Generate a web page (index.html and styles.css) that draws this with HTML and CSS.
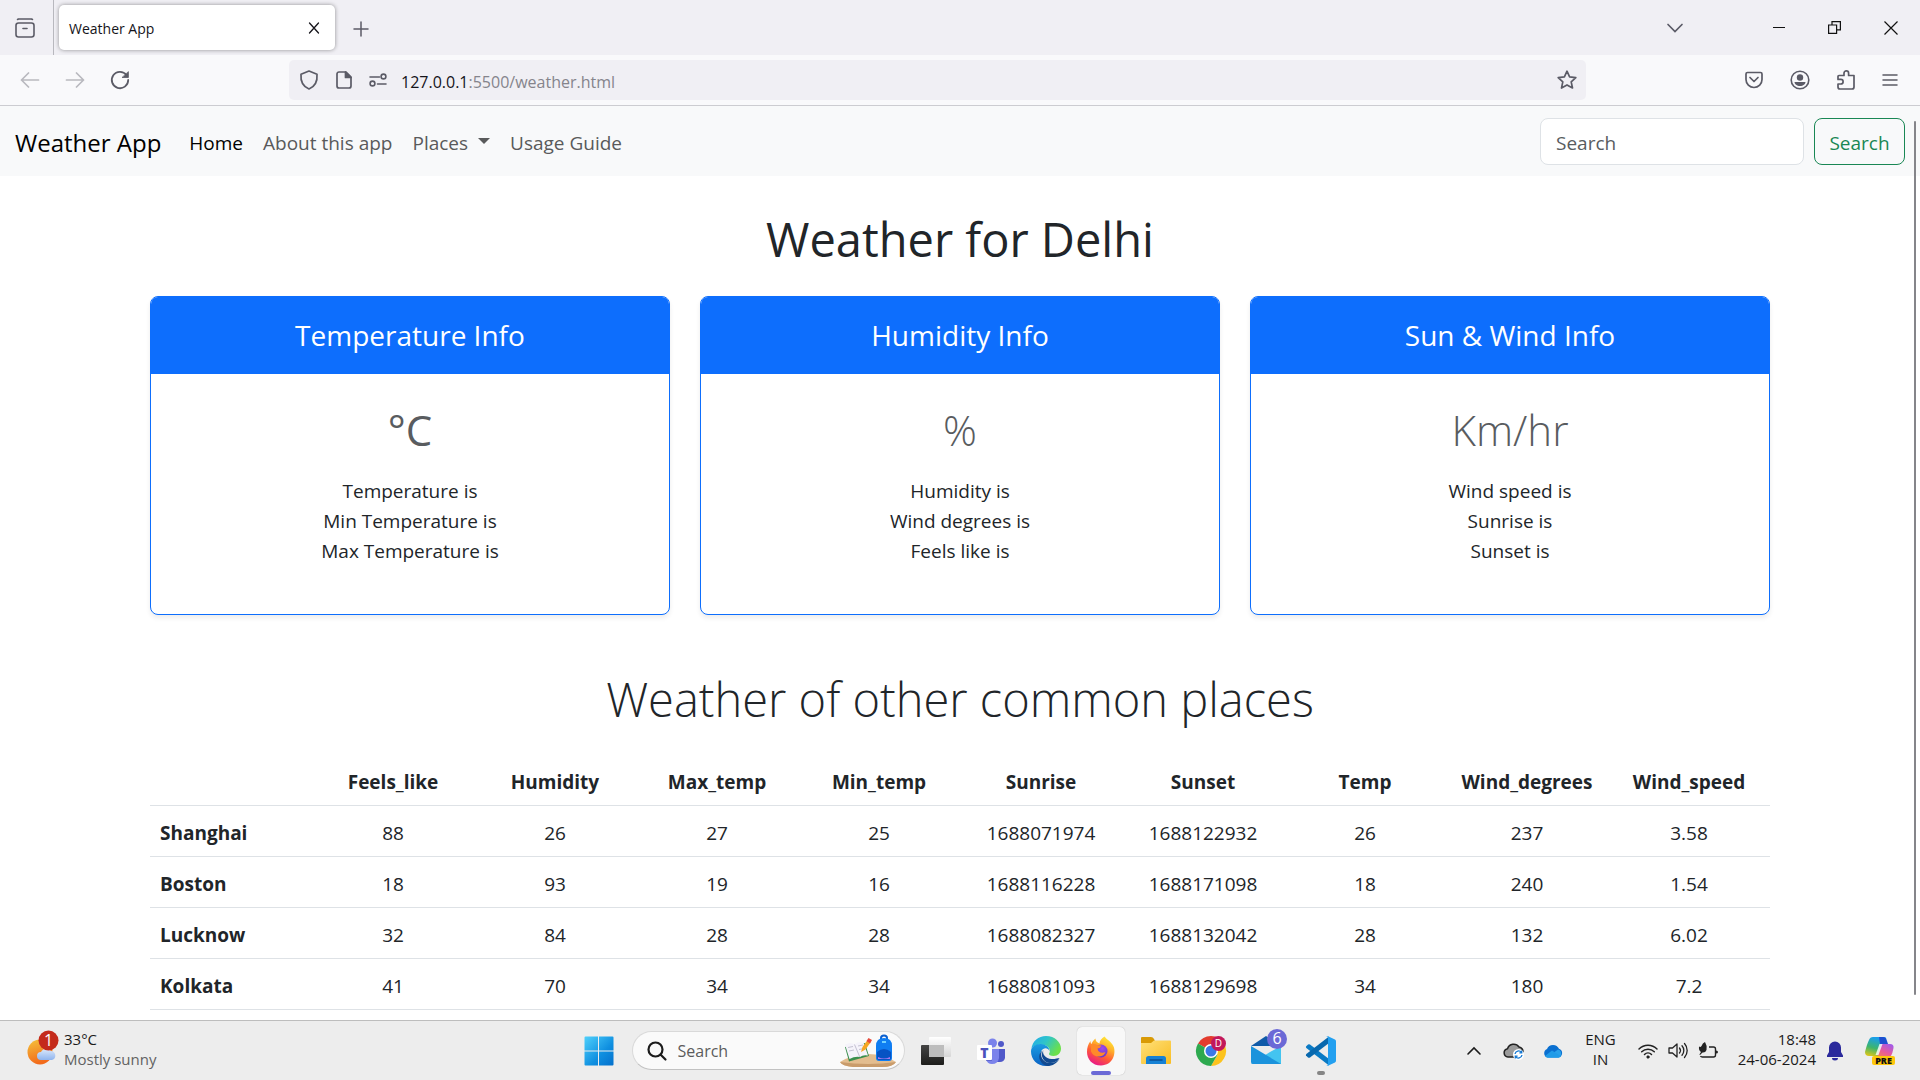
FILE: index.html
```html
<!DOCTYPE html>
<html lang="en">
<head>
<meta charset="utf-8">
<meta name="viewport" content="width=device-width, initial-scale=1">
<title>Weather App</title>
<link rel="stylesheet" href="styles.css">
</head>
<body>
<div class="tab-strip">
  <button class="icon-btn view-btn" aria-label="Firefox View">
    <svg width="20" height="20" viewBox="0 0 20 20" fill="none" stroke="#5b5b66" stroke-width="1.600" stroke-linecap="round"><path d="M3.500 1h13M2.500 1.500l1-.5M17.500 1.500l-1-.5"/><rect x="1" y="5" width="18" height="14" rx="2.500"/><path d="M8 10.500h4"/></svg>
  </button>
  <div class="tab">
    <span class="tab-title">Weather App</span>
    <button class="icon-btn" aria-label="Close tab"><svg width="12" height="12" viewBox="0 0 12 12" stroke="#15141a" stroke-width="1.300" stroke-linecap="round"><path d="M1.500 1l9 10M10.500 1l-9 10"/></svg></button>
  </div>
  <button class="icon-btn new-tab" aria-label="New tab"><svg width="16" height="16" viewBox="0 0 16 16" stroke="#5b5b66" stroke-width="1.500" stroke-linecap="round"><path d="M8 1v14M1 8h14"/></svg></button>
  <div class="window-controls">
    <button class="icon-btn list-tabs" aria-label="List all tabs"><svg width="16" height="10" viewBox="0 0 16 10" fill="none" stroke="#5b5b66" stroke-width="1.700" stroke-linecap="round"><path d="M1 1.500l7 7 7-7"/></svg></button>
    <button class="icon-btn" aria-label="Minimize"><svg width="12" height="12" viewBox="0 0 12 12" stroke="#111"><path d="M0 5.500h12"/></svg></button>
    <button class="icon-btn" aria-label="Restore"><svg width="13" height="13" viewBox="0 0 13 13" fill="none" stroke="#111" stroke-width="1.200"><path d="M.6 4h8v8.400h-8zM4 4V.6h8.400v8.200H8.600"/></svg></button>
    <button class="icon-btn" aria-label="Close window"><svg width="14" height="14" viewBox="0 0 14 14" stroke="#111" stroke-width="1.200"><path d="M.5.5l13 13M13.500.5l-13 13"/></svg></button>
  </div>
</div>

<div class="toolbar">
  <div class="nav-buttons">
    <button class="icon-btn faded" aria-label="Back"><svg width="20" height="20" viewBox="0 0 20 20" fill="none" stroke="#5b5b66" stroke-width="1.700" stroke-linecap="round" stroke-linejoin="round"><path d="M18.500 10H1.500M8.500 3l-7 7 7 7"/></svg></button>
    <button class="icon-btn faded" aria-label="Forward"><svg width="20" height="20" viewBox="0 0 20 20" fill="none" stroke="#5b5b66" stroke-width="1.700" stroke-linecap="round" stroke-linejoin="round"><path d="M1.500 10h17M11.500 3l7 7-7 7"/></svg></button>
    <button class="icon-btn" aria-label="Reload"><svg width="20" height="20" viewBox="0 0 20 20" fill="none" stroke="#5b5b66" stroke-width="1.800" stroke-linecap="round"><path d="M16.500 5A8.200 8.200 0 1 0 18.200 10"/><path d="M18.400 2v5.500h-6z" fill="#5b5b66" stroke-width=".8" stroke-linejoin="round"/></svg></button>
  </div>
  <div class="url-bar">
    <svg width="20" height="20" viewBox="0 0 20 20" fill="none" stroke="#5b5b66" stroke-width="1.700" stroke-linejoin="round"><path d="M10 1L18 4.200C18.500 10 17 16 10 19 3 16 1.500 10 2 4.200z"/></svg>
    <svg width="16" height="18" viewBox="0 0 16 18" fill="none" stroke="#5b5b66" stroke-width="1.700" stroke-linejoin="round"><path d="M3 1h7l5 5v9a2 2 0 0 1-2 2H3a2 2 0 0 1-2-2V3a2 2 0 0 1 2-2z"/><path d="M9.500 1v5.500H15z" fill="#5b5b66"/></svg>
    <svg width="18" height="14" viewBox="0 0 18 14" fill="none" stroke="#5b5b66" stroke-width="1.600" stroke-linecap="round"><path d="M1 4h9.500M8.500 11H17"/><circle cx="14.500" cy="3.500" r="2.400"/><circle cx="3.500" cy="10.500" r="2.400"/></svg>
    <span class="url"><span class="url-host">127.0.0.1</span>:5500/weather.html</span>
    <button class="icon-btn" aria-label="Bookmark this page"><svg width="20" height="20" viewBox="0 0 20 20" fill="none" stroke="#5b5b66" stroke-width="1.700" stroke-linejoin="round"><path d="M10 1.200l2.600 5.700 6.200.7-4.600 4.200 1.300 6.200-5.500-3.100-5.500 3.100 1.300-6.200L1.200 7.600l6.200-.7z"/></svg></button>
  </div>
  <div class="tool-buttons">
    <button class="icon-btn" aria-label="Save to Pocket"><svg width="18" height="18" viewBox="0 0 18 18" fill="none" stroke="#5b5b66" stroke-width="1.700" stroke-linecap="round" stroke-linejoin="round"><path d="M2.500 1.500h13A1.500 1.500 0 0 1 17 3v5.500a8 8 0 0 1-16 0V3a1.500 1.500 0 0 1 1.500-1.500zM5 6.500l4 4 4-4"/></svg></button>
    <button class="icon-btn" aria-label="Account"><svg width="20" height="20" viewBox="0 0 20 20"><circle cx="10" cy="10" r="8.800" fill="none" stroke="#5b5b66" stroke-width="1.600"/><circle cx="10" cy="7.500" r="3.200" fill="#5b5b66"/><path d="M4.500 12h11c0 2-2.400 4-5.500 4s-5.500-2-5.500-4z" fill="#5b5b66"/></svg></button>
    <button class="icon-btn" aria-label="Extensions"><svg width="18" height="20" viewBox="0 0 18 20" fill="none" stroke="#5b5b66" stroke-width="1.700" stroke-linejoin="round"><path d="M2 5.500h5V3.200a2.300 2.300 0 0 1 4.600 0v2.300H17V17a2 2 0 0 1-2 2H3a2 2 0 0 1-2-2v-3h2.800a2.300 2.300 0 0 0 0-4.600H1V6.500a1 1 0 0 1 1-1z"/></svg></button>
    <button class="icon-btn" aria-label="Open menu"><svg width="16" height="14" viewBox="0 0 16 14" stroke="#5b5b66" stroke-width="1.500" stroke-linecap="round"><path d="M1 2h14M1 7h14M1 12h14"/></svg></button>
  </div>
</div>

<div class="viewport">
  <nav class="navbar">
    <a class="brand" href="#">Weather App</a>
    <ul class="nav-links">
      <li><a class="active" href="#">Home</a></li>
      <li><a href="#about">About this app</a></li>
      <li><a class="dropdown" href="#places">Places</a></li>
      <li><a href="#guide">Usage Guide</a></li>
    </ul>
    <form class="search-form">
      <input type="search" placeholder="Search" aria-label="Search">
      <button type="button">Search</button>
    </form>
  </nav>

  <main class="container">
    <h1>Weather for Delhi</h1>
    <div class="cards">
      <section class="card">
        <h2>Temperature Info</h2>
        <div class="card-body">
          <p class="unit unit-regular">°C</p>
          <ul><li>Temperature is</li><li>Min Temperature is</li><li>Max Temperature is</li></ul>
        </div>
      </section>
      <section class="card">
        <h2>Humidity Info</h2>
        <div class="card-body">
          <p class="unit">%</p>
          <ul><li>Humidity is</li><li>Wind degrees is</li><li>Feels like is</li></ul>
        </div>
      </section>
      <section class="card">
        <h2>Sun &amp; Wind Info</h2>
        <div class="card-body">
          <p class="unit">Km/hr</p>
          <ul><li>Wind speed is</li><li>Sunrise is</li><li>Sunset is</li></ul>
        </div>
      </section>
    </div>

    <h2 class="places-title">Weather of other common places</h2>
    <table>
      <thead>
        <tr><td></td><th scope="col">Feels_like</th><th scope="col">Humidity</th><th scope="col">Max_temp</th><th scope="col">Min_temp</th><th scope="col">Sunrise</th><th scope="col">Sunset</th><th scope="col">Temp</th><th scope="col">Wind_degrees</th><th scope="col">Wind_speed</th></tr>
      </thead>
      <tbody>
        <tr><th scope="row">Shanghai</th><td>88</td><td>26</td><td>27</td><td>25</td><td>1688071974</td><td>1688122932</td><td>26</td><td>237</td><td>3.58</td></tr>
        <tr><th scope="row">Boston</th><td>18</td><td>93</td><td>19</td><td>16</td><td>1688116228</td><td>1688171098</td><td>18</td><td>240</td><td>1.54</td></tr>
        <tr><th scope="row">Lucknow</th><td>32</td><td>84</td><td>28</td><td>28</td><td>1688082327</td><td>1688132042</td><td>28</td><td>132</td><td>6.02</td></tr>
        <tr><th scope="row">Kolkata</th><td>41</td><td>70</td><td>34</td><td>34</td><td>1688081093</td><td>1688129698</td><td>34</td><td>180</td><td>7.2</td></tr>
      </tbody>
    </table>
  </main>
  <div class="scroll-thumb"></div>
</div>

<footer class="taskbar">
  <button class="widget">
    <svg width="32" height="36" viewBox="0 0 32 36">
      <defs><linearGradient id="sun" x1="0" y1="0" x2=".3" y2="1"><stop offset="0" stop-color="#f5c33b"/><stop offset="1" stop-color="#f26a1b"/></linearGradient><linearGradient id="cloud" x1="0" y1="0" x2="0" y2="1"><stop offset="0" stop-color="#dce9fb"/><stop offset="1" stop-color="#8fb4ee"/></linearGradient></defs>
      <circle cx="13" cy="22" r="12.500" fill="url(#sun)"/>
      <path d="M14 30a4 4 0 0 1 0-8 6 6 0 0 1 10-1 4.600 4.600 0 0 1 1 9z" fill="url(#cloud)"/>
      <circle cx="21.500" cy="10.500" r="10" fill="#c42b1c"/>
      <text x="21.500" y="16" text-anchor="middle" class="badge-text">1</text>
    </svg>
    <span class="widget-text"><span>33°C</span><span class="muted">Mostly sunny</span></span>
  </button>

  <div class="apps">
    <button class="app" aria-label="Start"><svg width="30" height="30" viewBox="0 0 30 30"><defs><linearGradient id="win" x1="0" y1="0" x2="1" y2="1"><stop offset="0" stop-color="#4fd0fb"/><stop offset=".6" stop-color="#0f8fe0"/><stop offset="1" stop-color="#0470cc"/></linearGradient></defs><path fill="url(#win)" d="M1.500.5H14v14H.5v-13a1 1 0 0 1 1-1zM15 .5h13.500a1 1 0 0 1 1 1v13H15zM.5 15.500H14v14H1.500a1 1 0 0 1-1-1zM15 15.500h14.500v13a1 1 0 0 1-1 1H15z"/></svg></button>
    <label class="task-search">
      <svg width="20" height="20" viewBox="0 0 20 20" fill="none" stroke="#1c1c1c" stroke-width="2.200" stroke-linecap="round"><circle cx="8.500" cy="8.500" r="7"/><path d="M13.500 13.500l5 5"/></svg>
      <input type="text" placeholder="Search" aria-label="Search Windows">
      <svg width="58" height="32" viewBox="0 0 58 32">
        <path d="M1 27Q14 19 29 19t28 8q-3 5-14 5H14Q3 31 1 27z" fill="#e3bd8f"/><path d="M1 27q28 4 56 0-3 5-14 5H14Q3 31 1 27z" fill="#c99c6c"/>
        <path d="M6 12l20-4 4 13-20 5.500z" fill="#3b8f4e"/><path d="M6 9.500q6-3 9.500 0 4-3.500 9-2l4.500 13q-5-1-8 1.500-5-1-10.500 2z" fill="#f5f3fa"/><path d="M15.500 9.500L20.800 22M9 12.500l5-1M10 16l5-1M19 11l5-1M20 14.500l5-1" stroke="#c4c1d2" fill="none"/>
        <path d="M22 17l1.500-5L28.500 5l3 2.500-5 7z" fill="#f6a623"/><path d="M27.500 6l2-3 3.500 2-2 3.500z" fill="#e64b3c"/>
        <path d="M42 5V3q0-2.500 3-2.500T48 3v2" stroke="#0a5fd0" stroke-width="2" fill="none"/><path d="M37 11q0-8 8-8t8 8v12q0 3-3 3H40q-3 0-3-3z" fill="#0f7df2"/><path d="M38 17q7-6 14 0v6q0 2-2 2H40q-2 0-2-2z" fill="#0753c4"/><path d="M39 22q6 3 12 0v2H39z" fill="#a779f0"/><path d="M43 7h4" stroke="#6fd0ff" stroke-width="2"/>
      </svg>
    </label>
    <button class="app" aria-label="Task view"><svg width="30" height="30" viewBox="0 0 30 30"><defs><linearGradient id="tvd" x1="0" y1="0" x2="0" y2="1"><stop offset="0" stop-color="#444"/><stop offset="1" stop-color="#1d1d1b"/></linearGradient><linearGradient id="tvl" x1="0" y1="0" x2="0" y2="1"><stop offset="0" stop-color="#fff"/><stop offset="1" stop-color="#d6d6d6"/></linearGradient></defs><rect y="9" width="23" height="20" rx="1" fill="url(#tvd)"/><rect x="8" y="1" width="22" height="20" rx="1" fill="url(#tvl)"/><path d="M8 9h15v12H8z" fill="#bdbdbd"/></svg></button>
    <button class="app" aria-label="Teams"><svg width="28" height="28" viewBox="0 0 28 28"><circle cx="15.500" cy="6" r="4.500" fill="#7b83eb"/><circle cx="24" cy="7" r="3" fill="#5059c9"/><path d="M20 12h8v9q-1 4-5 4h-3z" fill="#5059c9"/><path d="M9 12h13v9q-1 6-7 6-5 0-6-5z" fill="#7b83eb"/><path d="M15 12v12H9V12z" fill="#4b53bc" opacity=".6"/><rect y="8" width="15" height="15" rx="1" fill="#fff"/><text x="7.500" y="21" text-anchor="middle" class="teams-text">T</text></svg></button>
    <button class="app" aria-label="Edge"><svg width="30" height="30" viewBox="0 0 30 30"><defs><linearGradient id="eg1" x1="0" y1="0" x2="1" y2=".5"><stop offset="0" stop-color="#20a9ee"/><stop offset=".5" stop-color="#2fc4c9"/><stop offset="1" stop-color="#6be04a"/></linearGradient><linearGradient id="eg2" x1="0" y1="0" x2="0" y2="1"><stop offset="0" stop-color="#1b9de2"/><stop offset="1" stop-color="#0a62c4"/></linearGradient></defs><path d="M.3 13C1.500 5 7.500 0 15 0c9 0 15 6.500 15 12.500 0 4.500-3 7.500-7.500 7.500-3 0-5-1-4.500-2.200C20 15 18.500 10 13 9 7 8 1.500 10 .3 13z" fill="url(#eg1)"/><path d="M0 15.500C0 10.500 5 7.700 10 8c5 .2 8.500 3.500 8.500 7-1-2-3-3-5-2.500C9.500 13.500 8 19 10.500 24c1 2.500 3 4.500 5.500 6C6.500 30.500 0 23.500 0 15.500z" fill="url(#eg2)"/><path d="M11.500 14.500C8 19.500 12 27 19 27c4 0 7-1.500 9.500-4.500C26 27.500 21 30.300 15.500 30 8 27 5.500 18.500 11.500 14.500z" fill="#114a91"/><path d="M12.500 14c-1.800 4 2 8.500 8 9 3.500.3 6-1 8-1-2 3.500-5.500 5-9.500 5-6.500 0-10.500-7.500-6.500-13z" fill="#114a91"/></svg></button>
    <button class="app active-app" aria-label="Firefox"><svg width="30" height="30" viewBox="0 0 30 30"><defs><linearGradient id="ff" x1=".8" y1="0" x2=".3" y2="1"><stop offset="0" stop-color="#fff13a"/><stop offset=".35" stop-color="#ffb02a"/><stop offset=".65" stop-color="#ff5a36"/><stop offset="1" stop-color="#e8168b"/></linearGradient><radialGradient id="ffp" cx=".6" cy=".3" r=".8"><stop offset="0" stop-color="#a14be8"/><stop offset="1" stop-color="#5b34c8"/></radialGradient></defs><path d="M18.500.5c2 3 7 5 9.300 10.500C30 18 27 29 15 29.500 6 29.500 1 23 1 16c0-4 1-8 3.500-11 0 1.500.3 2.500 1 3 1-2.500 2-4 4-5.500 0 2 1 4 4 5 0-3 2-5 5-7z" fill="url(#ff)"/><circle cx="15" cy="15" r="6.500" fill="url(#ffp)"/><path d="M5 8.500q4-1 6 .5 2 0 4.500.5-1 2.500-4 3 0 2.500 3 4 3 .5 5-.5-1.500 4-6 4.500-6 .5-8.500-5z" fill="#ff8a2a"/></svg></button>
    <button class="app" aria-label="File Explorer"><svg width="30" height="27" viewBox="0 0 30 27"><defs><linearGradient id="fe" x1="0" y1="0" x2="1" y2="1"><stop offset="0" stop-color="#ffe07a"/><stop offset="1" stop-color="#f9bd22"/></linearGradient></defs><path d="M0 1q0-1 1-1h9q2 0 3 2l1 2v4H0z" fill="#d99a06"/><path d="M0 6h10l3-2.500h16q1 0 1 1V26q0 1-1 1H1q-1 0-1-1z" fill="url(#fe)"/><path d="M5 27v-5.500q0-2.500 2.500-2.500h15q2.500 0 2.500 2.500V27z" fill="#1681d4"/><path d="M9 23h12" stroke="#0b4f92" stroke-width="1.500" stroke-linecap="round"/></svg></button>
    <button class="app" aria-label="Chrome"><svg width="30" height="30" viewBox="0 0 30 30"><path d="M15 15L2 7.500A15 15 0 0 1 28 7.500z" fill="#e33b2e"/><path d="M15 15h-.1L28 7.500A15 15 0 0 1 15 30l6.500-11z" fill="#fcc31e"/><path d="M15 15l6.500 3.700L15 30A15 15 0 0 1 2 7.500z" fill="#2da94f"/><path d="M15 8h13l1 4-8 2z" fill="#fcc31e"/><circle cx="15" cy="15" r="7" fill="#fff"/><circle cx="15" cy="15" r="5.500" fill="#3b78e7"/><circle cx="22.500" cy="7.500" r="7.500" fill="#c2185b"/><text x="22.500" y="11" text-anchor="middle" class="profile-text">D</text></svg></button>
    <button class="app" aria-label="Mail"><svg class="mail-icon" width="36" height="36" viewBox="0 0 36 36"><path d="M0 17L15 7l15 10z" fill="#0f5aa8"/><path d="M3 17h24v6l-12 6-12-6z" fill="#ececec"/><path d="M30 17v18H0l19-12z" fill="#43c4f0"/><path d="M0 17l30 18H2q-2 0-2-2z" fill="#1b93dc"/><circle cx="26" cy="10" r="10" fill="#6b69d6"/><text x="26" y="15" text-anchor="middle" class="badge-text">6</text></svg></button>
    <button class="app running" aria-label="Visual Studio Code"><svg width="30" height="30" viewBox="0 0 30 30"><path d="M0 10.500l2-2q1-.5 2 0L23 23v6.500L.3 12q-.6-.8-.3-1.500z" fill="#0a7ac4"/><path d="M0 19.500l2 2q1 .5 2 0L23 7V.5L.3 18q-.6.800-.3 1.500z" fill="#0868ae"/><path d="M22 .2l7 3.300q1 .5 1 2v19q0 1.500-1 2l-7 3.300q-1 .2-2-.8 2 1 2-1V2q0-2-2-1 1-1 2-.8z" fill="#23a0f0"/></svg></button>
  </div>

  <div class="tray">
    <button class="icon-btn" aria-label="Show hidden icons"><svg width="14" height="9" viewBox="0 0 14 9" fill="none" stroke="#1b1b1b" stroke-width="1.600" stroke-linecap="round"><path d="M1 8l6-6 6 6"/></svg></button>
    <svg class="sync-icon" width="22" height="18" viewBox="0 0 22 18"><path d="M5 15a4.200 4.200 0 0 1-.5-8.300A6.500 6.500 0 0 1 16 5a5 5 0 0 1 4 5l-5 5z" fill="#9a9a9a" stroke="#222" stroke-width="1.500"/><circle cx="15.500" cy="12.500" r="5.500" fill="#fff"/><path d="M12 12a3.600 3.600 0 0 1 6.500-1.500M19 13a3.600 3.600 0 0 1-6.500 1.500M18.700 8.500v2.300h-2.300M12.300 16.500v-2.300h2.300" fill="none" stroke="#1277d3" stroke-width="1.300"/></svg>
    <svg width="20" height="14" viewBox="0 0 20 14"><path d="M4.500 13.500A4.500 4.500 0 0 1 4 5a6.500 6.500 0 0 1 12-.2 4.500 4.500 0 0 1-.5 8.700z" fill="#0a6fd0"/><path d="M4 13.500L15 5.500a4.200 4.200 0 0 1 .5 8z" fill="#28a0ea"/><path d="M2 12l7-5.500 9 5.800q-1 1.200-2.500 1.200h-11Q3 13.500 2 12z" fill="#1f9be8"/></svg>
    <button class="language"><span>ENG</span><span>IN</span></button>
    <button class="status" aria-label="Network, volume and battery">
      <svg width="20" height="16" viewBox="0 0 20 16" fill="none" stroke="#222" stroke-width="1.500" stroke-linecap="round"><path d="M1 6a12.700 12.700 0 0 1 18 0M3.700 8.700a9 9 0 0 1 12.600 0M6.500 11.500a5 5 0 0 1 7 0"/><circle cx="10" cy="14" r="1.200" fill="#222" stroke-width=".8"/></svg>
      <svg width="20" height="17" viewBox="0 0 20 17" fill="none" stroke="#222" stroke-width="1.300" stroke-linecap="round" stroke-linejoin="round"><path d="M1 6h3.500L9 2v13l-4.500-4H1zM11.500 6a4 4 0 0 1 0 5M14 3.800a7 7 0 0 1 0 9.400M16.500 1.500a10.500 10.500 0 0 1 0 14"/></svg>
      <svg width="20" height="17" viewBox="0 0 20 17"><path d="M11 5h4.500q2 0 2 2v6q0 2-2 2h-11q-1.500 0-2-1" fill="none" stroke="#222" stroke-width="1.400"/><path d="M18 8.500q2 0 2 1.500t-2 1.500z" fill="#222"/><path d="M7 0q2.500 4 1.500 8-1 2.800-4 2.500L2 13l-.6-.6L3 10Q.5 8.500 1 4.500q1.500 1 2.500-.5Q4.500 1 7 0z" fill="#222"/></svg>
    </button>
    <button class="clock"><span>18:48</span><span>24-06-2024</span></button>
    <button class="icon-btn bell" aria-label="Notifications"><svg width="16" height="20" viewBox="0 0 16 20" fill="#2b2a9c"><path d="M8 .5a6 6 0 0 1 6 6V11l2 3.500V16H0v-1.500L2 11V6.500a6 6 0 0 1 6-6zM5 17h6a3 2.500 0 0 1-6 0z"/></svg></button>
    <button class="icon-btn" aria-label="Copilot preview"><svg width="30" height="30" viewBox="0 0 30 30"><defs><linearGradient id="cp1" x1=".3" y1="0" x2="0" y2="1"><stop offset="0" stop-color="#1a9fe8"/><stop offset=".5" stop-color="#3db56c"/><stop offset="1" stop-color="#f2c80f"/></linearGradient><linearGradient id="cp2" x1=".8" y1="0" x2=".2" y2="1"><stop offset="0" stop-color="#a35be8"/><stop offset=".5" stop-color="#e85a9b"/><stop offset="1" stop-color="#f58a45"/></linearGradient></defs><path d="M8 1h11q3 0 2 3l-4 12q-1 4-4 4H4q-4 0-4-4Q2 8 4 4q1-3 4-3z" fill="url(#cp1)"/><path d="M14 1h4q3 0 4 4l1 3h-8z" fill="#1d4fd0"/><path d="M17 8h8q4 0 3.500 4-1 6-3 9-1 2-4 2H9q3 0 4-4l2-8q.5-3 2-3z" fill="url(#cp2)"/><path d="M14.500 8h3l-4 11h-3z" fill="#fff" opacity=".8"/><rect x="7" y="20" width="23" height="9" rx="2" fill="#fdc70c"/><text x="18.500" y="28" text-anchor="middle" class="pre-text">PRE</text></svg></button>
  </div>
</footer>
</body>
</html>
```
FILE: styles.css
```css
* { box-sizing: border-box; }

body {
  margin: 0;
  min-height: 100vh;
  display: flex;
  flex-direction: column;
  background: #fff;
  color: #212529;
  font-family: "Open Sans", "Noto Sans", sans-serif;
  font-size: 19px;
  line-height: 30px;
}

button, input { font: inherit; color: inherit; }
button { padding: 0; border: 0; background: none; }
a { color: inherit; text-decoration: none; }
ul { list-style: none; margin: 0; padding: 0; }
svg { display: block; flex: none; overflow: visible; }

.icon-btn { display: grid; place-items: center; flex: none; }

/* Browser tabs */
.tab-strip {
  display: flex;
  align-items: center;
  height: 55px;
  background: #f0eff4;
}
.view-btn {
  width: 54px;
  height: 55px;
  padding-right: 4px;
  border-right: 1px solid #b8b8be;
}
.tab {
  display: flex;
  align-items: center;
  justify-content: space-between;
  width: 276px;
  height: 45px;
  margin-left: 5px;
  padding: 0 15px 0 10px;
  border-radius: 5px;
  background: #fff;
  box-shadow: 0 0 4px rgba(0, 0, 0, .4);
}
.tab-title { padding-top: 2px; font-size: 14px; color: #15141a; }
.new-tab { margin-left: 18px; padding-top: 2px; }
.window-controls {
  display: flex;
  gap: 43px;
  margin-left: auto;
  padding-right: 22px;
}
.list-tabs { margin-right: 47px; }

/* Browser toolbar */
.toolbar {
  display: grid;
  grid-template-columns: 289px 1fr 334px;
  align-items: center;
  height: 51px;
  border-bottom: 1px solid #ccccd1;
  background: #f9f9fb;
}
.nav-buttons { display: flex; gap: 25px; padding-left: 20px; }
.faded { opacity: .4; }
.url-bar {
  display: flex;
  align-items: center;
  gap: 17px;
  height: 40px;
  padding: 0 9px 0 10px;
  border-radius: 5px;
  background: #f0eff4;
}
.url { flex: 1; margin-left: -3px; padding-top: 3px; font-size: 16px; color: #85848c; }
.url-host { color: #15141a; }
.tool-buttons {
  display: flex;
  justify-content: flex-end;
  align-items: center;
  gap: 27px;
  padding-right: 22px;
}

/* Page */
.viewport { flex: 1; position: relative; }
.scroll-thumb {
  position: absolute;
  top: 15px;
  right: 4px;
  bottom: 25px;
  width: 2px;
  border-radius: 1px;
  background: #85858a;
}
.navbar {
  display: flex;
  align-items: center;
  height: 70px;
  padding: 0 15px;
  background: #f8f9fa;
}
.brand { margin-right: 18px; padding-top: 3px; font-size: 24px; color: #000; }
.nav-links { display: flex; color: #595a5b; }
.nav-links a { display: block; padding: 12px 10px 9px; }
.nav-links .active { color: #000; }
.dropdown::after {
  content: "";
  display: inline-block;
  margin-left: 10px;
  vertical-align: 6px;
  border: 6px solid transparent;
  border-top-color: currentColor;
  border-bottom: 0;
}
.search-form { display: flex; gap: 10px; margin-left: auto; }
.search-form input {
  width: 264px;
  height: 47px;
  padding: 3px 15px 0;
  border: 1px solid #dee2e6;
  border-radius: 8px;
  background: #fff;
}
.search-form input::placeholder { color: #595c5f; opacity: 1; }
.search-form button {
  width: 91px;
  height: 47px;
  padding-top: 3px;
  border: 1px solid #198754;
  border-radius: 8px;
  color: #198754;
}

.container { max-width: 1650px; margin: 0 auto; padding: 30px 15px 10px; }
h1, h2 { margin: 0; font-weight: 400; text-align: center; }
h1 { margin-bottom: 24px; font-size: 47px; line-height: 66px; }
.cards { display: grid; grid-template-columns: repeat(3, 1fr); gap: 30px; }
.card {
  overflow: hidden;
  border: 1px solid #0d6efd;
  border-radius: 8px;
  background: #fff;
  box-shadow: 0 3px 5px rgba(0, 0, 0, .075);
  text-align: center;
}
.card h2 {
  padding: 20px;
  background: #0d6efd;
  color: #fff;
  font-size: 28px;
  line-height: 37px;
}
.card-body { padding: 28px 20px 48px; }
.unit {
  margin: 0 0 18px;
  color: #595c5f;
  font-size: 42px;
  font-weight: 300;
  line-height: 56px;
}
.unit-regular { font-weight: 400; }
.places-title {
  margin: 54px 0 26px;
  font-size: 47px;
  font-weight: 300;
  line-height: 60px;
}

table { width: 100%; border-collapse: collapse; table-layout: fixed; text-align: center; }
th, td { padding: 12px 0 8px; border-bottom: 1px solid #dee2e6; }
th { font-weight: 700; }
tbody th { padding-left: 10px; text-align: left; }

/* Windows taskbar */
.taskbar {
  display: grid;
  grid-template-columns: 1fr auto 1fr;
  align-items: center;
  height: 60px;
  border-top: 1px solid #bdbdbd;
  background: #ededed;
  color: #1b1b1b;
  font-size: 15px;
  line-height: 20px;
}
.widget { display: flex; align-items: center; gap: 5px; padding-left: 27px; text-align: left; }
.widget svg { margin-top: -6px; }
.widget-text, .language, .clock { display: flex; flex-direction: column; padding-bottom: 3px; }
.muted { color: #626262; }
.apps { display: flex; align-items: center; }
.app { display: grid; place-items: center; position: relative; width: 55px; height: 48px; }
.mail-icon { margin: -7px 0 0 5px; }
.task-search {
  display: flex;
  align-items: center;
  gap: 11px;
  width: 273px;
  height: 39px;
  margin: 0 4px 0 5px;
  padding: 0 7px 0 14px;
  border: 1px solid #d9d9d9;
  border-bottom-color: #c2c2c2;
  border-radius: 20px;
  background: #fafafa;
}
.task-search input {
  flex: 1;
  min-width: 0;
  padding: 0;
  border: 0;
  background: none;
  font-size: 16px;
}
.task-search input::placeholder { color: #5c5c5c; opacity: 1; }
.active-app {
  width: 48px;
  margin: 0 4px 0 3px;
  border-radius: 5px;
  background: #f8f8f8;
  box-shadow: 0 0 1px rgba(0, 0, 0, .3);
}
.active-app::after, .running::after {
  content: "";
  position: absolute;
  bottom: 0;
  left: 50%;
  width: 20px;
  height: 4px;
  margin-left: -10px;
  border-radius: 2px;
  background: #6b69d6;
}
.running::after { width: 8px; margin-left: -4px; background: #858585; }
.tray {
  display: flex;
  justify-content: flex-end;
  align-items: center;
  padding-right: 25px;
}
.sync-icon { margin: 0 18px 0 22px; }
.language { align-items: center; margin: 0 22px; }
.status { display: flex; align-items: center; gap: 10px; }
.clock { align-items: flex-end; margin-left: 20px; }
.bell { margin: 0 22px 0 11px; }

.badge-text { fill: #fff; font-size: 16px; }
.profile-text { fill: #fff; font-size: 10px; }
.teams-text { fill: #4b53bc; font-size: 14px; font-weight: 800; }
.pre-text { fill: #111; font-size: 9px; font-weight: 800; }
```
